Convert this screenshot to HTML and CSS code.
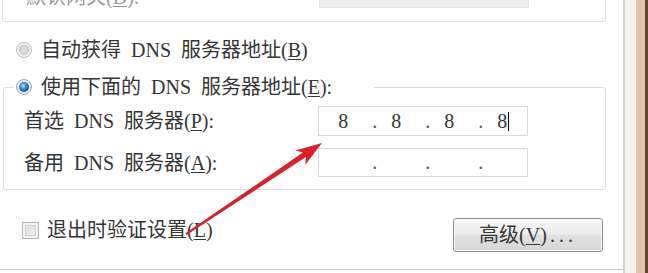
FILE: index.html
```html
<!DOCTYPE html>
<html lang="zh-CN">
<head>
<meta charset="utf-8">
<title>DNS</title>
<link rel="stylesheet" href="styles.css">
</head>
<body>
<div class="screen">
  <div class="main">
    <div class="grp-top">
      <div class="row-top">
        <span class="lbl-dim">默认网关(<u>D</u>):</span>
        <span class="field grey"></span>
      </div>
    </div>

    <div class="opt opt-auto">
      <span class="radio"></span>
      <span class="txt">自动获得 DNS 服务器地址(<u>B</u>)</span>
    </div>

    <fieldset class="grp">
      <legend class="opt legend">
        <span class="radio on"></span>
        <span class="txt">使用下面的 DNS 服务器地址(<u>E</u>):</span>
      </legend>
      <div class="frow first">
        <span class="flabel">首选 DNS 服务器(<u>P</u>):</span>
        <div class="field ip">
          <span class="cell">8</span><span class="cell dot">.</span><span class="cell">8</span><span class="cell dot">.</span><span class="cell">8</span><span class="cell dot">.</span><span class="cell">8<span class="caret"></span></span>
        </div>
      </div>
      <div class="frow second">
        <span class="flabel">备用 DNS 服务器(<u>A</u>):</span>
        <div class="field ip short">
          <span class="cell"></span><span class="cell dot">.</span><span class="cell"></span><span class="cell dot">.</span><span class="cell"></span><span class="cell dot">.</span><span class="cell"></span>
        </div>
      </div>
    </fieldset>

    <div class="bottom">
      <label class="check"><span class="box"></span><span>退出时验证设置(<u>L</u>)</span></label>
      <button class="btn">高级(<u>V</u>)<span class="dots">...</span></button>
    </div>

    <div class="footline"></div>
  </div>
  <div class="edge e1"></div>
  <div class="edge e2"></div>
  <div class="edge e3"></div>
  <div class="edge e4"></div>

  <svg class="arrow" width="648" height="273" viewBox="0 0 648 273" xmlns="http://www.w3.org/2000/svg">
    <polygon fill="#d8212a" points="322,143 305.3,164.8 305.9,157 186.6,235 185.4,233.2 302.9,152.6 295.4,150.5"/>
  </svg>
</div>
</body>
</html>
```

FILE: styles.css
```css
html, body {
  margin: 0;
  padding: 0;
  background: #ffffff;
}

.screen {
  position: relative;
  display: flex;
  width: 648px;
  height: 273px;
  overflow: hidden;
  font-family: "Liberation Serif", "Noto Sans CJK SC", serif;
  font-size: 20px;
  line-height: 24px;
  color: #353535;
  word-spacing: 5px;
}

.main {
  width: 623px;
  height: 273px;
  display: flex;
  flex-direction: column;
  flex: none;
}

u {
  text-decoration: underline;
  text-underline-offset: 2px;
  text-decoration-thickness: 1px;
}

/* top (clipped) group */
.grp-top {
  margin-left: 2px;
  width: 604px;
  height: 22px;
  box-sizing: border-box;
  border: 1px solid #dedede;
  border-top: none;
  border-radius: 0 0 3px 3px;
  overflow: hidden;
  flex: none;
}

.row-top {
  display: flex;
  align-items: flex-end;
  height: 30px;
  margin-top: -22px;
  padding-left: 23px;
}

.lbl-dim {
  width: 293px;
  color: #9a9a9a;
  line-height: 20px;
  margin-bottom: 1px;
}

.field {
  width: 210px;
  height: 30px;
  box-sizing: border-box;
  border: 1px solid #d6dae0;
  background: #ffffff;
  flex: none;
}

.field.grey {
  background: #efefef;
  border-color: #e3e3e3;
}

/* radio options */
.opt {
  display: flex;
  align-items: center;
  height: 24px;
}

.opt-auto {
  margin-top: 16px;
  padding-left: 16px;
  flex: none;
}

.radio {
  position: relative;
  width: 16px;
  height: 16px;
  box-sizing: border-box;
  border-radius: 50%;
  border: 1px solid #bcbcbc;
  background: radial-gradient(circle at 50% 50%, #e4e4e4 0%, #d3d3d3 42%, #c9c9c9 50%, #f6f6f6 58%, #ededed 100%);
  margin-right: 9px;
  flex: none;
}

.radio.on {
  border-color: #9aa6b3;
  background: radial-gradient(circle at 50% 50%, #f4f4f4 0%, #e2e2e2 100%);
}

.radio.on::after {
  content: "";
  position: absolute;
  left: 2px;
  top: 2px;
  width: 10px;
  height: 10px;
  border-radius: 50%;
  background: radial-gradient(circle at 42% 38%, #c4e8ff 0%, #4c9fdd 28%, #1a5c98 62%, #0c2f57 100%);
}

/* group box */
.grp {
  margin: 13px 17px 0 3px;
  padding: 0 0 12px 9px;
  border: 1px solid #dcdcdc;
  border-radius: 3px;
  min-width: 0;
  flex: none;
}

.legend {
  padding: 0 42px 0 3px;
  background: #ffffff;
}

.frow {
  display: flex;
  align-items: center;
  padding-left: 11px;
}

.frow.first {
  margin-top: 7px;
}

.frow.second {
  margin-top: 12px;
}

.flabel {
  width: 294px;
  flex: none;
}

.ip {
  display: grid;
  grid-template-columns: repeat(7, 26.5px);
  padding-left: 11px;
  align-items: center;
  line-height: 28px;
}

.ip.short {
  height: 29px;
  line-height: 27px;
}

.cell {
  text-align: center;
  white-space: nowrap;
}

.cell.dot {
  padding-left: 10px;
  color: #555555;
}

.caret {
  display: inline-block;
  width: 1px;
  height: 19px;
  background: #000000;
  vertical-align: -3px;
  margin-left: 1px;
  margin-right: -2px;
}

/* bottom row */
.bottom {
  display: flex;
  justify-content: space-between;
  align-items: flex-start;
  margin-top: 28px;
  padding: 0 20px 0 22px;
  height: 34px;
  flex: none;
}

.check {
  display: flex;
  align-items: center;
  height: 22px;
  line-height: 22px;
  margin-top: 1px;
}

.box {
  width: 17px;
  height: 17px;
  box-sizing: border-box;
  border: 1px solid #b5b5b5;
  background: linear-gradient(135deg, #d4d4d4 0%, #e9e9e9 55%, #f7f7f7 100%);
  box-shadow: inset 0 0 0 2px #f4f4f4, inset 0 0 0 3px #d0d0d0;
  margin-right: 8px;
  flex: none;
}

.btn {
  width: 150px;
  height: 34px;
  box-sizing: border-box;
  border: 1px solid #8d8d8d;
  border-radius: 3px;
  background: linear-gradient(#f6f6f6 0%, #eeeeee 45%, #e0e0e0 52%, #d6d6d6 100%);
  box-shadow: inset 0 0 0 1px #fbfbfb;
  font: inherit;
  color: #353535;
  padding: 0;
  word-spacing: 5px;
}

.dots {
  letter-spacing: 4px;
  margin-left: 3px;
}

.footline {
  margin-top: auto;
  margin-bottom: 3px;
  height: 1px;
  background: #cccccc;
  flex: none;
}

/* right frame edge */
.edge {
  height: 273px;
  flex: none;
}

.e1 { width: 2px; background: #d2d2d2; }
.e2 { width: 11px; background: #f6f0ee; }
.e3 { width: 9px; background: #dfc3ad; }
.e4 { width: 3px; background: #5e4637; }

.arrow {
  position: absolute;
  left: 0;
  top: 0;
  pointer-events: none;
}
```
